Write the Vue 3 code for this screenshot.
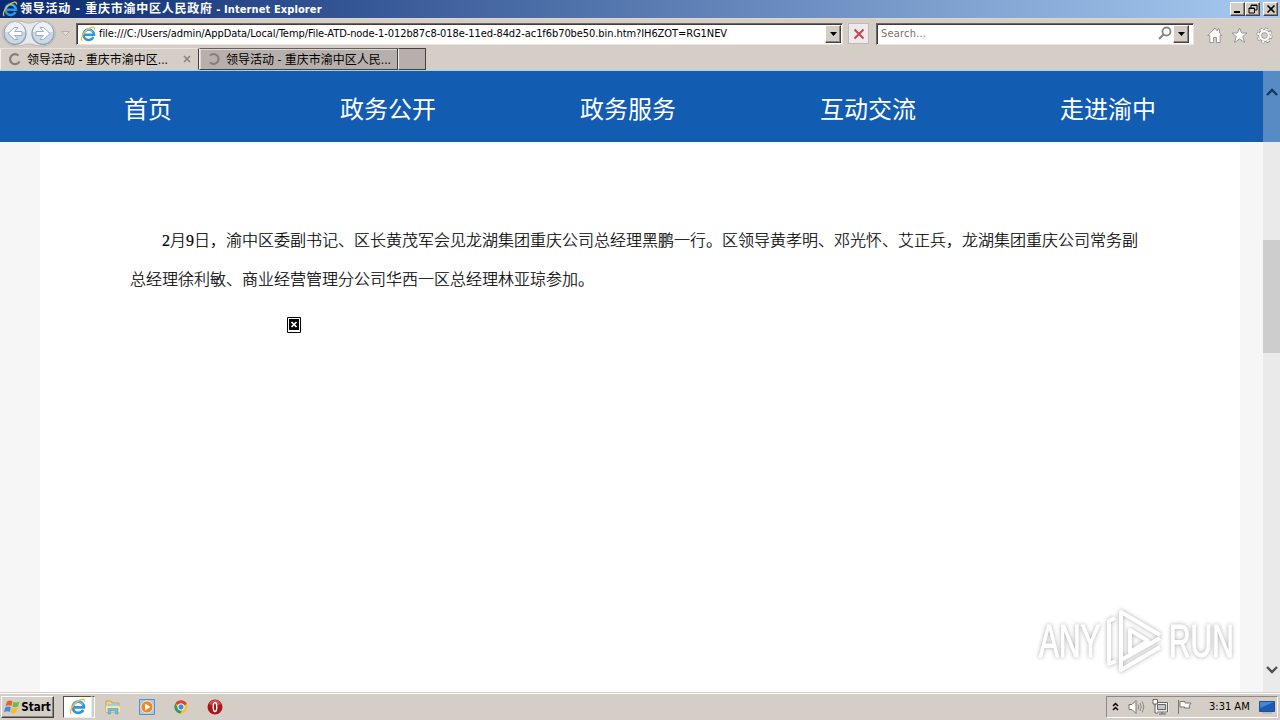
<script setup>
import {ref} from "vue";

// menu on the page
const menu = ["首页", "政务公开", "政务服务", "互动交流", "走进渝中"];

// browser tabs
const tabs = ref([
    {title: "领导活动 - 重庆市渝中区...", active: true},
    {title: "领导活动 - 重庆市渝中区人民...", active: false}
]);

const address = ref("file:///C:/Users/admin/AppData/Local/Temp/File-ATD-node-1-012b87c8-018e-11ed-84d2-ac1f6b70be50.bin.htm?IH6ZOT=RG1NEV");
const search = ref("");

const lines = [
    "2月9日，渝中区委副书记、区长黄茂军会见龙湖集团重庆公司总经理黑鹏一行。区领导黄孝明、邓光怀、艾正兵，龙湖集团重庆公司常务副",
    "总经理徐利敏、商业经营管理分公司华西一区总经理林亚琼参加。"
];
</script>

<template>
    <div class="screen">
        <!-- shared icons -->
        <svg class="defs" width="0" height="0">
            <symbol id="ie" viewBox="0 0 16 16">
                <path d="M13.400 11.200a5.300 5.300 0 1 1 .6-2.400H4.500" fill="none" stroke="#2d96de" stroke-width="2.500"/>
                <path d="M3.500 7.500a5 5 0 0 1 9.500-1" fill="none" stroke="#6cc8f5" stroke-width="1"/>
                <path d="M2.300 14.800C-.5 13.500 3.500 6 8.500 2.800c3.500-2.200 6.500-2.300 6 .7" fill="none" stroke="#f0bf2c" stroke-width="1.300"/>
            </symbol>
            <symbol id="down" viewBox="0 0 7 4"><path d="M0 0h7L3.500 4z"/></symbol>
        </svg>

        <div class="titlebar">
            <svg class="logo" width="16" height="16"><use href="#ie"/></svg>
            <span class="caption">领导活动 - 重庆市渝中区人民政府<i> - Internet Explorer</i></span>
            <div class="winbuttons">
                <button><svg width="12" height="10"><path d="M2 8h6" stroke="#000" stroke-width="2"/></svg></button>
                <button><svg width="12" height="10"><path d="M4 4V1h6v5H8M4 1.500h6M2 4h5.500v5H2zM2 4.500h6" fill="none" stroke="#000"/></svg></button>
                <button class="close"><svg width="12" height="10"><path d="M2.500 1.500l7 7M9.500 1.500l-7 7" stroke="#000" stroke-width="1.700"/></svg></button>
            </div>
        </div>

        <div class="toolbar">
            <svg class="arrows" width="74" height="30">
                <path d="M15 3C24 3 24 5 29 5S34 3 43 3a12.500 12.500 0 0 1 0 25C34 28 34 26 29 26s-5 2-14 2A12.500 12.500 0 0 1 15 3z" fill="#e8e9ed" stroke="#bbb5b2"/>
                <g v-for="x in [15, 43]" :key="x">
                    <circle :cx="x" cy="15.500" r="11" fill="#c9d8e9" stroke="#96a3b1" stroke-width="1.300"/>
                    <path :d="`M${x - 10} 14a10 10 0 0 1 20 0z`" fill="#eef2f7"/>
                </g>
                <path d="M22 13.500h-7.500l3.500-4h-3.500l-6.500 6 6.500 6H18l-3.500-4H22z" fill="#fff" stroke="#9aafc5"/>
                <path d="M36 13.500h7.500l-3.500-4h3.500l6.500 6-6.500 6H40l3.500-4H36z" fill="#fff" stroke="#9aafc5"/>
                <path d="M61.500 13.500h8l-4 4z" fill="#e2ddd7" stroke="#b7b0aa"/>
            </svg>
            <div class="field address">
                <svg width="16" height="16"><use href="#ie"/></svg>
                <span class="url">{{ address }}</span>
                <button class="drop"><svg width="7" height="4"><use href="#down"/></svg></button>
            </div>
            <button class="stop"><svg width="12" height="12"><path d="M1.500 1.500l9 9M10.500 1.500l-9 9" stroke="#c44650" stroke-width="2"/></svg></button>
            <div class="field search">
                <input v-model="search" type="text" placeholder="Search...">
                <svg width="14" height="15"><circle cx="8.500" cy="5.500" r="4" fill="none" stroke="#858585" stroke-width="1.800"/><path d="M5.500 8.500L1 13" stroke="#858585" stroke-width="2.200"/></svg>
                <button class="drop"><svg width="7" height="4"><use href="#down"/></svg></button>
            </div>
            <div class="tools">
                <svg width="16" height="17"><path d="M8 1L.8 8.500h2V15.500h3.700v-5h3v5h3.700v-7h2L12.500 6V2h-2v2z" fill="#fff" stroke="#969696"/></svg>
                <svg width="17" height="17"><path d="M8.500 1l2.200 5h5.300l-4.200 3.500 1.700 6-5-3.500-5 3.500 1.700-6L1 6h5.300z" fill="#fff" stroke="#969696"/></svg>
                <svg width="17" height="17"><circle cx="8.500" cy="8.500" r="6.800" fill="none" stroke="#8f8f8f" stroke-width="2.400" stroke-dasharray="3.300 2.040"/><circle cx="8.500" cy="8.500" r="4.400" fill="#d5cec7" stroke="#8f8f8f" stroke-width="3.800"/><circle cx="8.500" cy="8.500" r="6.400" fill="none" stroke="#fff" stroke-width="1.800" stroke-dasharray="2.500 2.530"/><circle cx="8.500" cy="8.500" r="4.300" fill="none" stroke="#fff" stroke-width="2.300"/></svg>
            </div>
        </div>

        <div class="tabs">
            <div v-for="tab in tabs" :key="tab.title" class="tab" :class="{active: tab.active}">
                <svg width="14" height="14"><path :d="tab.active ? 'M11.500 9.500a5 5 0 1 1-1-6' : 'M3 3.500a5 5 0 1 1 0 7'" fill="none" stroke="#85807d" stroke-width="2.200"/></svg>
                <span>{{ tab.title }}</span>
                <svg v-if="tab.active" class="x" width="8" height="8"><path d="M1 1l6 6M7 1L1 7" stroke="#8a8580" stroke-width="1.700"/></svg>
            </div>
            <div class="newtab"></div>
        </div>

        <div class="view">
            <div class="page">
                <nav class="menu">
                    <a v-for="item in menu" :key="item">{{ item }}</a>
                </nav>
                <div class="article">
                    <p><span v-for="line in lines" :key="line">{{ line }}</span></p>
                    <svg class="missing" width="14" height="16"><path d="M.5.5h13v15H.5z" fill="#fff" stroke="#000"/><path d="M2 2h10v11H2z"/><path d="M4.500 5l5 5M9.500 5l-5 5" stroke="#fff" stroke-width="1.700"/></svg>
                </div>
            </div>
            <div class="scroll">
                <svg class="up" width="12" height="8"><path d="M1 7l5-5 5 5" fill="none" stroke="#16365f" stroke-width="2.300"/></svg>
                <div class="thumb"></div>
                <svg class="dn" width="12" height="8"><path d="M1 1l5 5 5-5" fill="none" stroke="#4f4f4f" stroke-width="2.300"/></svg>
            </div>
            <div class="watermark">
                <span>ANY</span>
                <svg width="60" height="66" fill="none" stroke="#fff" stroke-width="4" stroke-linejoin="round">
                    <path d="M9 10L3 13v43l7-3M15 44V4l39 23M15 4v48l39-22M15 52v10l39-23M24 22v22l18-11z"/>
                </svg>
                <span>RUN</span>
            </div>
        </div>

        <div class="taskbar">
            <button class="start">
                <svg width="17" height="16"><path d="M3 2.500q3-2 5.500-.3L7.300 7Q4.500 5.500 1.500 7.300z" fill="#e9602b"/><path d="M9.500 2.700q3 1.700 6-.2L14 7.500q-3 1.500-5.700-.2z" fill="#72b944"/><path d="M1.200 8.500q3-2 5.700-.3L5.700 13Q3 11.500 0 13.300z" fill="#3f8cdb"/><path d="M8 8.500q3 1.700 5.800 0l-1.500 5q-3 1.700-5.700-.2z" fill="#f5bd25"/></svg>
                <span>Start</span>
            </button>
            <div class="task"><svg width="17" height="17"><use href="#ie"/></svg></div>
            <div class="split"></div>
            <div class="quick">
                <svg width="16" height="16"><path d="M1 2h5l1 2h7v9H1z" fill="#eed57c" stroke="#c3a553"/><path d="M3 5h10v3H3z" fill="#9ccfe0"/><path d="M1 7h14v6H1z" fill="#f6e6a5"/><path d="M3 15V9.500h10V15h-2.500v-3h-5v3z" fill="#79b8d8" stroke="#5e9dc0" stroke-width=".6"/></svg>
                <svg width="16" height="16"><path d="M.5.5h15v15H.5z" fill="#a9cbe7" stroke="#5693c5"/><circle cx="8" cy="8" r="6" fill="#ee871c" stroke="#fff" stroke-width=".7"/><path d="M6 4.500v7L11.500 8z" fill="#fff"/></svg>
                <svg width="16" height="16"><circle cx="8" cy="8" r="6.500" fill="#f2c52b"/><path d="M8 8L2.300 4.600A6.600 6.600 0 0 1 13.900 5z" fill="#dc4437"/><path d="M2.300 4.600A6.600 6.600 0 0 0 7.500 14.500L10 9 5 9z" fill="#319b54"/><circle cx="8" cy="8" r="3.200" fill="#4788dd" stroke="#fff"/></svg>
                <svg width="16" height="16"><circle cx="8" cy="8" r="7.500" fill="#ad1519"/><path d="M2 5a6.500 6.500 0 0 1 12 0q-6 3-12 0z" fill="#d44b4b"/><ellipse cx="8" cy="8" rx="1.700" ry="4.600" fill="#8f0b10" stroke="#fff" stroke-width="1.500"/></svg>
            </div>
            <div class="tray">
                <svg width="7" height="9"><path d="M1 4l2.500-2.500L6 4M1 8l2.500-2.500L6 8" fill="none" stroke="#000" stroke-width="1.500"/></svg>
                <svg class="sound" width="17" height="16"><path d="M1 5.500h3l4-4v13l-4-4H1z" fill="#fff" stroke="#777"/><path d="M10 5.500q1.500 2.500 0 5M12 4q2.600 4 0 8M14 2.500q3.500 5.500 0 11" fill="none" stroke="#888"/></svg>
                <svg class="net" width="17" height="16"><path d="M4.500 4.500h11v8h-11z" fill="#c7c7c7" stroke="#fff" stroke-width="2"/><path d="M3.500 3.500h12v9.500h-12zM5.500 5.500h8v5h-8zM7 15h7M10 13v2" fill="none" stroke="#666"/><path d="M1 .5h4.500V5H1zM3 5v9h3" fill="#fff" stroke="#666"/></svg>
                <svg class="flag" width="17" height="16"><path d="M2.500 1v14M4 2.500h5v1.500h6l-2 3 1 2H8.500V8H4z" fill="#fff" stroke="#777"/></svg>
                <span class="clock">3:31 AM</span>
                <svg width="16" height="14"><path d="M.5 1.500h15v10H.5z" fill="#1d5ab5" stroke="#294e80"/><path d="M1 2h14L1 8z" fill="#4388d7"/><path d="M3 13h10" stroke="#8daac7"/></svg>
            </div>
        </div>
    </div>
</template>

<style>
body {
    overflow: hidden;
}
</style>

<style scoped>
.screen {
    width: 1280px;
    height: 720px;
    display: flex;
    flex-direction: column;
    overflow: hidden;
    background: #d5cec7;
    color: #000;
    font-family: "DejaVu Sans Condensed", "Noto Sans CJK SC", sans-serif;
    font-size: 11px;
    white-space: nowrap;
}
.screen * {
    box-sizing: border-box;
}
svg {
    display: block;
    flex: none;
}
.defs {
    position: absolute;
}
button {
    padding: 0;
    display: flex;
    align-items: center;
    justify-content: center;
    flex: none;
    border: 1px solid;
    border-color: #fff #45413f #45413f #fff;
    box-shadow: inset -1px -1px #8c8680;
    background: #d5cec7;
}
.titlebar {
    height: 18px;
    flex: none;
    display: flex;
    align-items: center;
    padding: 0 2px;
    background: linear-gradient(90deg, #0a2a72, #a6caf0);
    color: #fff;
    font-weight: bold;
}
.caption {
    margin-left: 2px;
    flex: 1;
    font-size: 12px;
    line-height: 18px;
    letter-spacing: .75px;
}
.caption i {
    font-style: normal;
    font-size: 11px;
    letter-spacing: .1px;
}
.winbuttons {
    display: flex;
}
.winbuttons button {
    width: 15px;
    height: 14px;
}
.winbuttons .close {
    margin-left: 3px;
}
.toolbar {
    height: 30px;
    flex: none;
    display: flex;
    align-items: flex-start;
    border-top: 1px solid #ddd6ca;
}
.arrows {
    margin-top: -1px;
}
.field {
    height: 22px;
    margin-top: 4px;
    display: flex;
    align-items: center;
    background: #fff;
    border: 1px solid;
    border-color: #6e6764 #e9e4df #e9e4df #6e6764;
    box-shadow: inset 1px 1px #423c3c;
}
.address {
    width: 767px;
    margin-left: 2px;
    padding: 0 1px 0 3px;
}
.field > svg {
    margin-top: -1px;
}
.url {
    flex: 1;
    margin-left: 3px;
    margin-top: -1px;
    letter-spacing: -.078px;
}
.drop {
    width: 16px;
    height: 18px;
}
.stop {
    width: 21px;
    height: 21px;
    margin: 4px 7px 0 5px;
    background: #eceaec;
    border-color: #c0b9b5;
    box-shadow: none;
}
.search {
    width: 318px;
    padding: 0 4px 0 4px;
}
.search input {
    flex: 1;
    min-width: 0;
    border: 0;
    padding: 0;
    margin-top: -1px;
    outline: none;
    font: inherit;
    letter-spacing: .2px;
    background: none;
}
.search input::placeholder {
    color: #77716e;
}
.search > svg {
    margin-right: 1px;
}
.tools {
    display: flex;
    gap: 8px;
    margin: 8px 0 0 13px;
}
.tabs {
    height: 23px;
    flex: none;
    display: flex;
    align-items: flex-end;
    border-bottom: 1px solid #b5cedc;
    font-size: 12px;
}
.tab {
    display: flex;
    align-items: center;
    height: 22px;
    width: 199px;
    padding-left: 7px;
    background: #b7afab;
    border: 1px solid #443e3c;
    border-left-color: #eee;
    border-top-color: #655f5c;
    box-shadow: inset 1px 1px #ddd7d3;
}
.tab.active {
    background: #d5cec7;
    border-color: #e8e3df #443e3c #d5cec7 #eee;
    box-shadow: none;
    width: 199px;
}
.tab span {
    margin: -2px 0 0 5px;
}
.tab .x {
    margin-left: auto;
    margin-right: 7px;
}
.newtab {
    width: 28px;
    height: 22px;
    background: #b7afab;
    border: 1px solid #443e3c;
    border-left-color: #eee;
}
.view {
    height: 621px;
    flex: none;
    position: relative;
    display: flex;
    background: #f6f6f6;
}
.page {
    width: 1263px;
}
.menu {
    height: 71px;
    display: flex;
    padding-left: 28px;
    background: #125cb1;
    color: #fff;
    font-family: "Noto Sans CJK SC", sans-serif;
    font-size: 24px;
    line-height: 73px;
}
.menu a {
    width: 240px;
    text-align: center;
}
.article {
    width: 1200px;
    height: 550px;
    margin-left: 40px;
    padding: 79px 90px 0;
    background: #fff;
}
.article p {
    margin: 0;
    font-family: "Liberation Serif", "Noto Sans CJK SC", serif;
    font-weight: 300;
    font-size: 16px;
    line-height: 39px;
    text-indent: 32px;
    -webkit-text-stroke: .2px #000;
}
.article span {
    display: block;
}
.article span + span {
    text-indent: 0;
}
.missing {
    margin: 18px 0 0 157px;
}
.scroll {
    width: 17px;
    display: flex;
    flex-direction: column;
    align-items: center;
    background: linear-gradient(#588bc4 71px, #eaeaea 71px);
}
.up {
    margin-top: 17px;
}
.thumb {
    width: 17px;
    height: 113px;
    margin-top: 144px;
    background: #cdcdcd;
}
.dn {
    margin-top: auto;
    margin-bottom: 18px;
}
/* overlay in the corner of the page */
.watermark {
    position: absolute;
    left: 1039px;
    top: 537px;
    display: flex;
    align-items: center;
    color: #fff;
    font-family: "Liberation Sans", sans-serif;
    font-size: 46px;
    line-height: 66px;
    -webkit-text-stroke: 1px #fff;
    filter: drop-shadow(0 0 2px #aaa);
}
.watermark span {
    width: 64px;
    transform: scaleX(.65);
    transform-origin: 0 50%;
}
.watermark svg {
    margin: 0 3px 0 3px;
}
.taskbar {
    height: 28px;
    flex: none;
    display: flex;
    align-items: center;
    padding: 0 2px 0 1px;
    border-top: 1px solid #d5cec7;
    box-shadow: inset 0 1px #fff;
}
.start {
    width: 53px;
    height: 22px;
    color: #000;
    font-family: inherit;
    font-weight: bold;
    font-size: 11.500px;
}
.task {
    width: 29px;
    height: 22px;
    margin-left: 9px;
    display: flex;
    align-items: center;
    justify-content: center;
    background: #fff;
    border: 1px solid;
    border-color: #55504d #eee #eee #55504d;
}
.split {
    width: 3px;
    height: 22px;
    border: 1px solid;
    border-color: #55504d #fff #fff #d5cec7;
}
.quick {
    display: flex;
    gap: 18px;
    margin-left: 10px;
}
.tray {
    width: 172px;
    height: 22px;
    margin-left: auto;
    display: flex;
    align-items: center;
    padding-left: 5px;
    border: 1px solid;
    border-color: #8f8984 #fff #fff #8f8984;
}
.sound {
    margin-left: 9px;
}
.net {
    margin-left: 7px;
}
.flag {
    margin-left: 7px;
}
.clock {
    width: 51px;
    margin-left: 16px;
    margin-right: -1px;
}
</style>
